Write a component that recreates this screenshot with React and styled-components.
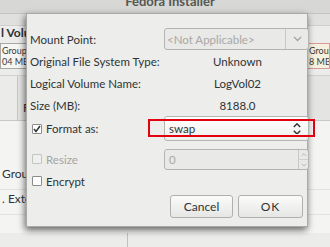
import styled, { createGlobalStyle } from "styled-components";

const Global = createGlobalStyle`
  html, body { margin: 0; padding: 0; }
  body {
    width: 330px;
    height: 247px;
    overflow: hidden;
    font-family: Lato, "DejaVu Sans", sans-serif;
    color: #2e3436;
  }
`;

const Screen = styled.div`
  position: relative;
  width: 330px;
  height: 247px;
  overflow: hidden;
  background: #ececea;
  display: flex;
  flex-direction: column;
`;

const TitleBar = styled.div`
  height: 13px;
  background: #d7d7d5;
  border-bottom: 1px solid #c4c4c2;
  display: flex;
  justify-content: center;
  overflow: hidden;
  padding-left: 10px;
`;

const Title = styled.span`
  margin-top: -6px;
  font-size: 13px;
  font-weight: bold;
  color: #555753;
  line-height: 15px;
`;

const SubBar = styled.div`
  height: 11px;
  background: #e0e0de;
  border-bottom: 1px solid #d0d0ce;
`;

const Heading = styled.div`
  height: 14px;
  font-size: 12px;
  font-weight: bold;
  line-height: 14px;
  padding-left: 1px;
`;

const GroupRow = styled.div`
  display: flex;
  justify-content: space-between;
  margin-top: 3px;
  height: 26px;
`;

const GroupBox = styled.div`
  width: ${(p) => p.$w}px;
  box-sizing: border-box;
  border: 1px solid ${(p) => (p.$hot ? "#d99a9a" : "#a8a8a6")};
  background: ${(p) => (p.$hot ? "#f6f1de" : "#f6f6f5")};
  font-size: 9px;
  line-height: 11px;
  padding: 1px 0 0 1px;
  color: #3a3a3a;
  white-space: nowrap;
  overflow: hidden;
`;

const Toolbar = styled.div`
  margin-top: 6px;
  height: 44px;
  background: #e4e4e2;
  border-top: 1px solid #d2d2d0;
  border-bottom: 1px solid #c8c8c6;
  display: flex;
`;

const ToolCell = styled.div`
  width: 17px;
  border-right: 1px solid #c8c8c6;
  background: #ebebe9;
`;

const ToolLabel = styled.div`
  padding: 24px 0 0 5px;
  font-size: 12px;
`;

const ListArea = styled.div`
  flex: 1;
  background: #f4f4f3;
  display: flex;
  flex-direction: column;
  padding-top: 44px;
  font-size: 12px;
`;

const ListLine = styled.div`
  height: 24px;
  line-height: 18px;
  padding-left: 2px;
  border-bottom: 1px solid #e2e2e0;
`;

const BottomStrip = styled.div`
  height: 14px;
  display: flex;
  background: #ececea;
`;

const StripCell = styled.div`
  width: ${(p) => p.$w}px;
  border-right: 1px solid #c0c0be;
`;

const Dialog = styled.div`
  position: absolute;
  left: 26px;
  top: 13px;
  width: 282px;
  height: 214px;
  box-sizing: border-box;
  background: #ededeb;
  border: 1px solid #a9a9a7;
  box-shadow: -1px 3px 7px rgba(0, 0, 0, 0.6);
  display: flex;
  flex-direction: column;
  font-size: 11.5px;
`;

const Form = styled.div`
  display: grid;
  grid-template-columns: 134px 145px;
  grid-template-rows: 22px 22px 22px 22px 25px 29px 22px;
  padding: 14px 0 0 3px;
  align-items: center;
`;

const Label = styled.div`
  white-space: nowrap;
  color: ${(p) => (p.$off ? "#a4a4a2" : "#2e3436")};
  align-self: ${(p) => (p.$end ? "end" : "center")};
  height: ${(p) => (p.$end ? "22px" : "auto")};
  display: flex;
  align-items: center;
  gap: 4px;
`;

const Value = styled.div`
  text-align: center;
  padding-left: 2px;
`;

const Combo = styled.div`
  height: ${(p) => p.$h}px;
  box-sizing: border-box;
  border: 1px solid #b4b4b1;
  border-radius: 3px;
  background: ${(p) =>
    p.$off ? "#e9e9e7" : "linear-gradient(#ffffff, #efefed)"};
  color: ${(p) => (p.$off ? "#a8a8a6" : "#2e3436")};
  display: flex;
  align-items: center;
  align-self: ${(p) => (p.$end ? "end" : "center")};
`;

const ComboText = styled.div`
  flex: 1;
  padding-left: ${(p) => p.$pad ?? 4}px;
`;

const ArrowCell = styled.div`
  width: 22px;
  align-self: stretch;
  border-left: ${(p) => (p.$sep ? "1px solid #c8c8c6" : "none")};
  display: flex;
  flex-direction: column;
  align-items: center;
  justify-content: center;
  gap: 2px;
`;

const SpinCell = styled.div`
  width: 9px;
  align-self: stretch;
  border-left: 1px solid #c8c8c6;
  display: flex;
  flex-direction: column;
`;

const SpinHalf = styled.div`
  flex: 1;
  display: flex;
  align-items: center;
  justify-content: center;
  & + & {
    border-top: 1px solid #cfcfcd;
  }
`;

const Check = styled.span`
  width: 10px;
  height: 10px;
  box-sizing: border-box;
  border: 1px solid ${(p) => (p.$off ? "#c4c4c2" : "#8c8c8a")};
  background: ${(p) => (p.$off ? "#efefed" : "#ffffff")};
  border-radius: 1px;
  display: inline-flex;
  align-items: center;
  justify-content: center;
  margin-left: 2px;
`;

const Buttons = styled.div`
  display: flex;
  justify-content: flex-end;
  gap: 5px;
  padding: 3px 4px 0 0;
`;

const Button = styled.div`
  width: ${(p) => p.$w}px;
  height: 23px;
  box-sizing: border-box;
  border: 1px solid #b0b0ad;
  border-radius: 3px;
  background: linear-gradient(#fbfbfa, #e6e6e4);
  display: flex;
  align-items: center;
  justify-content: center;
  font-size: 12px;
  letter-spacing: ${(p) => (p.$wide ? "1px" : "0")};
`;

const Highlight = styled.div`
  position: absolute;
  left: 148px;
  top: 119px;
  width: 167px;
  height: 18px;
  box-sizing: border-box;
  border: 2px solid #e3000f;
`;

const Chevron = ({ up, color = "#2e3436", w = 7, sw = 1.4 }) => (
  <svg width={w} height={w * 0.6} viewBox="0 0 10 6">
    <path
      d={up ? "M1 5 L5 1 L9 5" : "M1 1 L5 5 L9 1"}
      fill="none"
      stroke={color}
      strokeWidth={sw}
    />
  </svg>
);

const Tick = () => (
  <svg width="8" height="8" viewBox="0 0 8 8">
    <path d="M1 4 L3 6.5 L7 1" fill="none" stroke="#2e3436" strokeWidth="1.5" />
  </svg>
);

export default function App() {
  return (
    <>
      <Global />
      <Screen>
        <TitleBar>
          <Title>Fedora Installer</Title>
        </TitleBar>
        <SubBar />
        <Heading>l Volu</Heading>
        <GroupRow>
          <GroupBox $w={27}>
            Group0
            <br />
            04 MB
          </GroupBox>
          <GroupBox $w={23} $hot>
            Group
            <br />8 MB
          </GroupBox>
        </GroupRow>
        <Toolbar>
          <ToolCell />
          <ToolLabel>F</ToolLabel>
        </Toolbar>
        <ListArea>
          <ListLine>Grou</ListLine>
          <ListLine>. Exte</ListLine>
        </ListArea>
        <BottomStrip>
          <StripCell $w={127} />
        </BottomStrip>

        <Dialog>
          <Form>
            <Label>Mount Point:</Label>
            <Combo $h={22} $off>
              <ComboText $pad={2}>&lt;Not Applicable&gt;</ComboText>
              <ArrowCell $sep>
                <Chevron color="#a0a09e" w={9} />
              </ArrowCell>
            </Combo>

            <Label>Original File System Type:</Label>
            <Value>Unknown</Value>

            <Label>Logical Volume Name:</Label>
            <Value>LogVol02</Value>

            <Label>Size (MB):</Label>
            <Value>8188.0</Value>

            <Label>
              <Check>
                <Tick />
              </Check>
              Format as:
            </Label>
            <Combo $h={25}>
              <ComboText>swap</ComboText>
              <ArrowCell>
                <Chevron up w={8} sw={1.8} />
                <Chevron w={8} sw={1.8} />
              </ArrowCell>
            </Combo>

            <Label $off $end>
              <Check $off />
              Resize
            </Label>
            <Combo $h={21} $off $end>
              <ComboText>0</ComboText>
              <SpinCell>
                <SpinHalf>
                  <Chevron up color="#b0b0ae" w={6} />
                </SpinHalf>
                <SpinHalf>
                  <Chevron color="#b0b0ae" w={6} />
                </SpinHalf>
              </SpinCell>
            </Combo>

            <Label>
              <Check />
              Encrypt
            </Label>
            <div />
          </Form>
          <Buttons>
            <Button $w={63}>Cancel</Button>
            <Button $w={65} $wide>
              OK
            </Button>
          </Buttons>
        </Dialog>
        <Highlight />
      </Screen>
    </>
  );
}
